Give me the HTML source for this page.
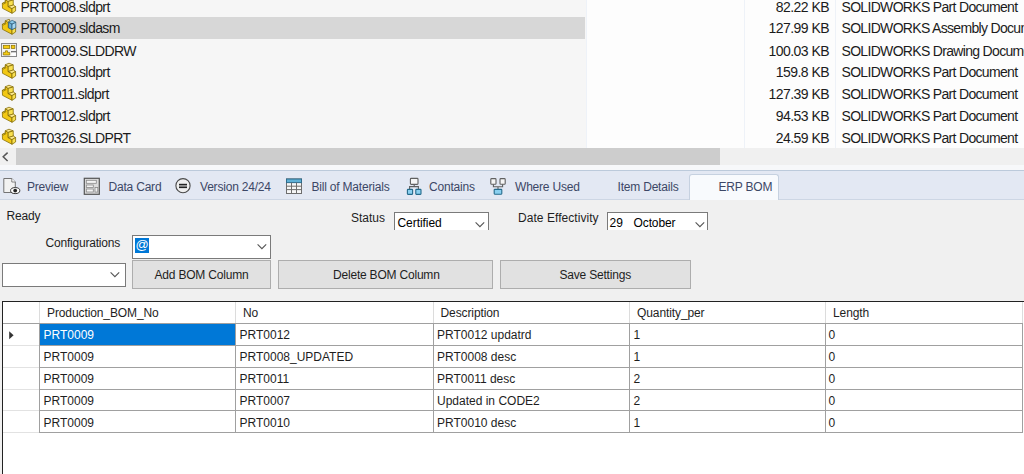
<!DOCTYPE html>
<html><head><meta charset="utf-8"><title>ERP BOM</title>
<style>
html,body{margin:0;padding:0;}
body{width:1024px;height:474px;overflow:hidden;position:relative;background:#f0f0f0;font-family:"Liberation Sans", sans-serif;}
.t{position:absolute;white-space:pre;line-height:20px;}
.r{position:absolute;}
.ic{position:absolute;overflow:visible;}
</style></head><body>
<div class="r" style="left:0px;top:0px;width:1024px;height:165px;background:#fdfdfd;"></div>
<div class="r" style="left:0px;top:0px;width:586px;height:148px;background:#f6f6f6;"></div>
<div class="r" style="left:0px;top:17px;width:585px;height:22px;background:#d7d7d7;"></div>
<div class="r" style="left:586px;top:0px;width:1px;height:148px;background:#eef2f8;"></div>
<div class="r" style="left:744px;top:0px;width:1px;height:148px;background:#eef2f8;"></div>
<div class="r" style="left:835px;top:0px;width:1px;height:148px;background:#eef2f8;"></div>
<svg class="ic" style="left:0px;top:-4px" width="18" height="18" viewBox="0 0 18 18">
<g stroke="#806800" stroke-width="0.75" stroke-linejoin="round">
<polygon points="5.2,3.8 8.2,5.4 8.2,10.6 12,12.6 12,17.3 2.5,12.3 2.3,7.4 5.2,6.0" fill="#f2c814"/>
<polygon points="2.3,7.4 5.2,6.0 6.2,6.5 3.4,8.0" fill="#ffe45a"/>
<polygon points="5.2,3.8 9,2.2 13.2,3.9 8.2,5.4" fill="#ffe98a"/>
<polygon points="8.2,5.4 13.2,3.9 13.3,9 8.2,10.6" fill="#f9e050"/>
<polygon points="8.2,10.6 13.3,9 15.6,10.5 12,12.6" fill="#ffec90"/>
<polygon points="12,12.6 15.6,10.5 15.6,15 12,17.3" fill="#f9e050"/>
</g></svg>
<div class="t" style="left:20.5px;top:-3px;font-size:14px;color:#1b1b1b;letter-spacing:-0.55px;">PRT0008.sldprt</div>
<div class="t" style="right:195px;top:-3px;font-size:14px;color:#1b1b1b;letter-spacing:-0.55px">82.22 KB</div>
<div class="t" style="left:841.5px;top:-3px;font-size:14px;color:#1b1b1b;letter-spacing:-0.68px;">SOLIDWORKS Part Document</div>
<svg class="ic" style="left:0px;top:17px" width="18" height="18" viewBox="0 0 18 18">
<g stroke="#806800" stroke-width="0.75" stroke-linejoin="round">
<polygon points="5.2,3.8 8.2,5.4 8.2,10.6 12,12.6 12,17.3 2.5,12.3 2.3,7.4 5.2,6.0" fill="#f2c814"/>
<polygon points="2.3,7.4 5.2,6.0 6.2,6.5 3.4,8.0" fill="#ffe45a"/>
<polygon points="12,12.6 15.6,10.5 15.6,15 12,17.3" fill="#f9e050"/>
<polygon points="5.2,3.8 9,2.4 10,3 8.2,5.4" fill="#ffe98a"/>
</g>
<g stroke="#2a5a78" stroke-width="0.75" stroke-linejoin="round">
<polygon points="8.6,5.2 12,7.0 12,12.6 8.6,10.8" fill="#6fb2d8"/>
<polygon points="12,7.0 15.8,5.2 15.8,10.8 12,12.6" fill="#a8d8f2"/>
<polygon points="8.6,5.2 12.2,3.4 15.8,5.2 12,7.0" fill="#8ccaea"/>
</g></svg>
<div class="t" style="left:20.5px;top:18px;font-size:14px;color:#1b1b1b;letter-spacing:-0.55px;">PRT0009.sldasm</div>
<div class="t" style="right:195px;top:18px;font-size:14px;color:#1b1b1b;letter-spacing:-0.55px">127.99 KB</div>
<div class="t" style="left:841.5px;top:18px;font-size:14px;color:#1b1b1b;letter-spacing:-0.68px;">SOLIDWORKS Assembly Document</div>
<svg class="ic" style="left:0px;top:40px" width="18" height="16" viewBox="0 0 18 16">
<rect x="1.5" y="3.5" width="15" height="13" fill="#f4f4f4" stroke="#888" stroke-width="1"/>
<rect x="3.3" y="5.3" width="6.4" height="3.2" fill="#f6cc10" stroke="#8a7000" stroke-width="0.7"/>
<rect x="11.3" y="5.3" width="3.6" height="3.2" fill="#f6cc10" stroke="#8a7000" stroke-width="0.7"/>
<path d="M5.5,10.8 h2 v1.6 h2.2 v2.6 h-6.4 v-2.6 h2.2 z" fill="#f6cc10" stroke="#8a7000" stroke-width="0.7"/>
<rect x="11" y="11.2" width="5.2" height="1.2" fill="#555"/>
<rect x="11.5" y="12.6" width="4.4" height="3.2" fill="#fff"/>
</svg>
<div class="t" style="left:20.5px;top:41px;font-size:14px;color:#1b1b1b;letter-spacing:-0.55px;">PRT0009.SLDDRW</div>
<div class="t" style="right:195px;top:41px;font-size:14px;color:#1b1b1b;letter-spacing:-0.55px">100.03 KB</div>
<div class="t" style="left:841.5px;top:41px;font-size:14px;color:#1b1b1b;letter-spacing:-0.68px;">SOLIDWORKS Drawing Document</div>
<svg class="ic" style="left:0px;top:61px" width="18" height="18" viewBox="0 0 18 18">
<g stroke="#806800" stroke-width="0.75" stroke-linejoin="round">
<polygon points="5.2,3.8 8.2,5.4 8.2,10.6 12,12.6 12,17.3 2.5,12.3 2.3,7.4 5.2,6.0" fill="#f2c814"/>
<polygon points="2.3,7.4 5.2,6.0 6.2,6.5 3.4,8.0" fill="#ffe45a"/>
<polygon points="5.2,3.8 9,2.2 13.2,3.9 8.2,5.4" fill="#ffe98a"/>
<polygon points="8.2,5.4 13.2,3.9 13.3,9 8.2,10.6" fill="#f9e050"/>
<polygon points="8.2,10.6 13.3,9 15.6,10.5 12,12.6" fill="#ffec90"/>
<polygon points="12,12.6 15.6,10.5 15.6,15 12,17.3" fill="#f9e050"/>
</g></svg>
<div class="t" style="left:20.5px;top:62px;font-size:14px;color:#1b1b1b;letter-spacing:-0.55px;">PRT0010.sldprt</div>
<div class="t" style="right:195px;top:62px;font-size:14px;color:#1b1b1b;letter-spacing:-0.55px">159.8 KB</div>
<div class="t" style="left:841.5px;top:62px;font-size:14px;color:#1b1b1b;letter-spacing:-0.68px;">SOLIDWORKS Part Document</div>
<svg class="ic" style="left:0px;top:83px" width="18" height="18" viewBox="0 0 18 18">
<g stroke="#806800" stroke-width="0.75" stroke-linejoin="round">
<polygon points="5.2,3.8 8.2,5.4 8.2,10.6 12,12.6 12,17.3 2.5,12.3 2.3,7.4 5.2,6.0" fill="#f2c814"/>
<polygon points="2.3,7.4 5.2,6.0 6.2,6.5 3.4,8.0" fill="#ffe45a"/>
<polygon points="5.2,3.8 9,2.2 13.2,3.9 8.2,5.4" fill="#ffe98a"/>
<polygon points="8.2,5.4 13.2,3.9 13.3,9 8.2,10.6" fill="#f9e050"/>
<polygon points="8.2,10.6 13.3,9 15.6,10.5 12,12.6" fill="#ffec90"/>
<polygon points="12,12.6 15.6,10.5 15.6,15 12,17.3" fill="#f9e050"/>
</g></svg>
<div class="t" style="left:20.5px;top:84px;font-size:14px;color:#1b1b1b;letter-spacing:-0.55px;">PRT0011.sldprt</div>
<div class="t" style="right:195px;top:84px;font-size:14px;color:#1b1b1b;letter-spacing:-0.55px">127.39 KB</div>
<div class="t" style="left:841.5px;top:84px;font-size:14px;color:#1b1b1b;letter-spacing:-0.68px;">SOLIDWORKS Part Document</div>
<svg class="ic" style="left:0px;top:105px" width="18" height="18" viewBox="0 0 18 18">
<g stroke="#806800" stroke-width="0.75" stroke-linejoin="round">
<polygon points="5.2,3.8 8.2,5.4 8.2,10.6 12,12.6 12,17.3 2.5,12.3 2.3,7.4 5.2,6.0" fill="#f2c814"/>
<polygon points="2.3,7.4 5.2,6.0 6.2,6.5 3.4,8.0" fill="#ffe45a"/>
<polygon points="5.2,3.8 9,2.2 13.2,3.9 8.2,5.4" fill="#ffe98a"/>
<polygon points="8.2,5.4 13.2,3.9 13.3,9 8.2,10.6" fill="#f9e050"/>
<polygon points="8.2,10.6 13.3,9 15.6,10.5 12,12.6" fill="#ffec90"/>
<polygon points="12,12.6 15.6,10.5 15.6,15 12,17.3" fill="#f9e050"/>
</g></svg>
<div class="t" style="left:20.5px;top:106px;font-size:14px;color:#1b1b1b;letter-spacing:-0.55px;">PRT0012.sldprt</div>
<div class="t" style="right:195px;top:106px;font-size:14px;color:#1b1b1b;letter-spacing:-0.55px">94.53 KB</div>
<div class="t" style="left:841.5px;top:106px;font-size:14px;color:#1b1b1b;letter-spacing:-0.68px;">SOLIDWORKS Part Document</div>
<svg class="ic" style="left:0px;top:127px" width="18" height="18" viewBox="0 0 18 18">
<g stroke="#806800" stroke-width="0.75" stroke-linejoin="round">
<polygon points="5.2,3.8 8.2,5.4 8.2,10.6 12,12.6 12,17.3 2.5,12.3 2.3,7.4 5.2,6.0" fill="#f2c814"/>
<polygon points="2.3,7.4 5.2,6.0 6.2,6.5 3.4,8.0" fill="#ffe45a"/>
<polygon points="5.2,3.8 9,2.2 13.2,3.9 8.2,5.4" fill="#ffe98a"/>
<polygon points="8.2,5.4 13.2,3.9 13.3,9 8.2,10.6" fill="#f9e050"/>
<polygon points="8.2,10.6 13.3,9 15.6,10.5 12,12.6" fill="#ffec90"/>
<polygon points="12,12.6 15.6,10.5 15.6,15 12,17.3" fill="#f9e050"/>
</g></svg>
<div class="t" style="left:20.5px;top:128px;font-size:14px;color:#1b1b1b;letter-spacing:-0.55px;">PRT0326.SLDPRT</div>
<div class="t" style="right:195px;top:128px;font-size:14px;color:#1b1b1b;letter-spacing:-0.55px">24.59 KB</div>
<div class="t" style="left:841.5px;top:128px;font-size:14px;color:#1b1b1b;letter-spacing:-0.68px;">SOLIDWORKS Part Document</div>
<div class="r" style="left:0px;top:148px;width:1024px;height:17px;background:#f0f0f0;"></div>
<div class="r" style="left:16px;top:148px;width:704px;height:17px;background:#cdcdcd;"></div>
<svg class="ic" style="left:0px;top:148px" width="16" height="17" viewBox="0 0 16 17"><path d="M7.6,4.6 L3.2,8.8 L7.6,13" fill="none" stroke="#555" stroke-width="1.5"/></svg>
<div class="r" style="left:0px;top:165px;width:1024px;height:5px;background:#f7f8fa;"></div>
<div class="r" style="left:0px;top:170px;width:1024px;height:1px;background:#bccadb;"></div>
<div class="r" style="left:0px;top:171px;width:1024px;height:28px;background:#e3e8f3;"></div>
<div class="r" style="left:0px;top:199px;width:1024px;height:1px;background:#cdd6e4;"></div>
<div class="r" style="left:689px;top:174px;width:90px;height:26px;background:#f8fafd;border:1px solid #c6d1e0;border-bottom:none;border-radius:3px 3px 0 0;box-sizing:border-box"></div>
<div class="t" style="left:27px;top:177px;font-size:12px;color:#3c4766;letter-spacing:-0.2px;">Preview</div>
<div class="t" style="left:108.5px;top:177px;font-size:12px;color:#3c4766;letter-spacing:-0.2px;">Data Card</div>
<div class="t" style="left:200px;top:177px;font-size:12px;color:#3c4766;letter-spacing:-0.2px;">Version 24/24</div>
<div class="t" style="left:311.5px;top:177px;font-size:12px;color:#3c4766;letter-spacing:-0.2px;">Bill of Materials</div>
<div class="t" style="left:429px;top:177px;font-size:12px;color:#3c4766;letter-spacing:-0.2px;">Contains</div>
<div class="t" style="left:515px;top:177px;font-size:12px;color:#3c4766;letter-spacing:-0.2px;">Where Used</div>
<div class="t" style="left:617.5px;top:177px;font-size:12px;color:#3c4766;letter-spacing:-0.2px;">Item Details</div>
<div class="t" style="left:718.5px;top:177px;font-size:12px;color:#3c4766;letter-spacing:-0.2px;">ERP BOM</div>
<svg class="ic" style="left:0px;top:172px" width="24" height="26" viewBox="0 0 24 26">
<path d="M3.8,6.5 h8 l3.5,3.5 v10.5 h-11.5 z" fill="#f2f2f2" stroke="#666" stroke-width="0.9"/>
<path d="M11.8,6.5 v3.5 h3.5" fill="#fff" stroke="#666" stroke-width="0.8"/>
<ellipse cx="15.2" cy="18.6" rx="4.6" ry="3" fill="#fff" stroke="#333" stroke-width="1"/>
<circle cx="15.2" cy="18.6" r="1.9" fill="#222"/>
</svg>
<svg class="ic" style="left:80px;top:172px" width="24" height="26" viewBox="0 0 24 26">
<rect x="4.3" y="6.3" width="15" height="16" fill="#dcdcdc" stroke="#555" stroke-width="1.2"/>
<rect x="6.3" y="8.3" width="10" height="3" fill="#f4f4f4" stroke="#888" stroke-width="0.8"/>
<rect x="6.3" y="13" width="7" height="2.5" fill="#f4f4f4" stroke="#888" stroke-width="0.8"/>
<rect x="6.3" y="17" width="7" height="3" fill="#f4f4f4" stroke="#888" stroke-width="0.8"/>
<rect x="15" y="15.5" width="2.8" height="4.6" fill="#eee" stroke="#888" stroke-width="0.8"/>
</svg>
<svg class="ic" style="left:170px;top:172px" width="26" height="26" viewBox="0 0 26 26">
<circle cx="13" cy="13.7" r="7.1" fill="#efefef" stroke="#4a4a4a" stroke-width="1.1"/>
<rect x="9" y="11.8" width="8" height="1.5" fill="#222"/>
<rect x="9" y="13.3" width="8" height="1.4" fill="#888"/>
<rect x="9" y="14.7" width="8" height="1.4" fill="#222"/>
</svg>
<svg class="ic" style="left:282px;top:172px" width="24" height="26" viewBox="0 0 24 26">
<rect x="4.5" y="7" width="15" height="14.5" fill="#f6f6f6" stroke="#6e6e6e" stroke-width="1"/>
<rect x="4.5" y="7" width="15" height="3.6" fill="#5fb0d6" stroke="#2f6c8c" stroke-width="1"/>
<path d="M9.5,10.6 v10.9 M14.5,10.6 v10.9 M4.5,14.2 h15 M4.5,17.6 h15" stroke="#6e6e6e" stroke-width="1"/>
</svg>
<svg class="ic" style="left:402px;top:172px" width="24" height="26" viewBox="0 0 24 26">
<rect x="8.4" y="6.4" width="7.6" height="6" rx="0.8" fill="#f6f6f6" stroke="#606060" stroke-width="1.1"/>
<path d="M12.2,12.4 v2.2 M7.6,17 v-2.4 h8.8 v2.4" fill="none" stroke="#606060" stroke-width="1.1"/>
<rect x="5.4" y="17.4" width="5.2" height="5" rx="0.6" fill="#8ad0f0" stroke="#256b8c" stroke-width="1.1"/>
<rect x="13.8" y="17.4" width="5.2" height="5" rx="0.6" fill="#8ad0f0" stroke="#256b8c" stroke-width="1.1"/>
</svg>
<svg class="ic" style="left:486px;top:172px" width="24" height="26" viewBox="0 0 24 26">
<rect x="4.8" y="6.6" width="5.2" height="5.6" rx="0.8" fill="#f6f6f6" stroke="#606060" stroke-width="1.1"/>
<rect x="14" y="6.6" width="5.2" height="5.6" rx="0.8" fill="#f6f6f6" stroke="#606060" stroke-width="1.1"/>
<path d="M7.4,12.2 v2.6 h9.2 v-2.6 M12,14.8 v2.4" fill="none" stroke="#606060" stroke-width="1.1"/>
<rect x="8.2" y="17.4" width="7.6" height="4.8" rx="0.6" fill="#8ad0f0" stroke="#256b8c" stroke-width="1.1"/>
</svg>
<div class="r" style="left:0px;top:200px;width:1024px;height:274px;background:#f0f0f0;"></div>
<div class="t" style="left:6.5px;top:206px;font-size:12px;color:#1e1e1e;letter-spacing:-0.2px;">Ready</div>
<div class="t" style="left:45.5px;top:233px;font-size:12px;color:#1e1e1e;letter-spacing:-0.2px;">Configurations</div>
<div class="t" style="left:351px;top:208px;font-size:12px;color:#1e1e1e;letter-spacing:0px;">Status</div>
<div class="t" style="left:518px;top:208px;font-size:12px;color:#1e1e1e;letter-spacing:0.05px;">Date Effectivity</div>
<div class="r" style="left:394px;top:212px;width:95px;height:18px;background:#fff;border:1px solid #7a7a7a;border-bottom:none;box-sizing:border-box"></div>
<div class="t" style="left:397.5px;top:213px;font-size:12px;color:#000;letter-spacing:-0.05px;">Certified</div>
<svg class="ic" style="left:474px;top:221px" width="12" height="8" viewBox="0 0 12 8"><path d="M1.6,1.4 L5.9,5.7 L10.2,1.4" fill="none" stroke="#555" stroke-width="1.1"/></svg>
<div class="r" style="left:607px;top:212px;width:101px;height:18px;background:#fff;border:1px solid #7a7a7a;border-bottom:none;box-sizing:border-box"></div>
<div class="t" style="left:609.5px;top:213px;font-size:12px;color:#000;letter-spacing:0px;">29</div>
<div class="t" style="left:633.5px;top:213px;font-size:12px;color:#000;letter-spacing:-0.1px;">October</div>
<svg class="ic" style="left:693.5px;top:221px" width="12" height="8" viewBox="0 0 12 8"><path d="M1.6,1.4 L5.9,5.7 L10.2,1.4" fill="none" stroke="#555" stroke-width="1.1"/></svg>
<div class="r" style="left:132px;top:235px;width:139px;height:24px;background:#fff;border:1px solid #7a7a7a;box-sizing:border-box"></div>
<div class="r" style="left:135px;top:238px;width:14px;height:15px;background:#0078d7;"></div>
<div class="t" style="left:135.5px;top:235px;font-size:13px;color:#fff;line-height:20px">@</div>
<svg class="ic" style="left:256px;top:243px" width="12" height="8" viewBox="0 0 12 8"><path d="M1.6,1.4 L5.9,5.7 L10.2,1.4" fill="none" stroke="#555" stroke-width="1.1"/></svg>
<div class="r" style="left:2px;top:263px;width:124px;height:24px;background:#fff;border:1px solid #7a7a7a;box-sizing:border-box"></div>
<svg class="ic" style="left:109px;top:271px" width="12" height="8" viewBox="0 0 12 8"><path d="M1.6,1.4 L5.9,5.7 L10.2,1.4" fill="none" stroke="#555" stroke-width="1.1"/></svg>
<div class="r" style="left:132px;top:260px;width:139px;height:29px;background:#e1e1e1;border:1px solid #adadad;box-sizing:border-box"></div>
<div class="t" style="left:154.5px;top:265px;font-size:12px;color:#1e1e1e;letter-spacing:-0.2px;">Add BOM Column</div>
<div class="r" style="left:278px;top:260px;width:215px;height:29px;background:#e1e1e1;border:1px solid #adadad;box-sizing:border-box"></div>
<div class="t" style="left:333px;top:265px;font-size:12px;color:#1e1e1e;letter-spacing:-0.2px;">Delete BOM Column</div>
<div class="r" style="left:500px;top:260px;width:191px;height:29px;background:#e1e1e1;border:1px solid #adadad;box-sizing:border-box"></div>
<div class="t" style="left:559.5px;top:265px;font-size:12px;color:#1e1e1e;letter-spacing:-0.2px;">Save Settings</div>
<div class="r" style="left:2px;top:301px;width:1022px;height:173px;background:#ffffff;"></div>
<div class="r" style="left:2px;top:301px;width:1022px;height:1px;background:#222;"></div>
<div class="r" style="left:2px;top:301px;width:1px;height:173px;background:#222;"></div>
<div class="r" style="left:39px;top:302px;width:1px;height:21px;background:#dcdcdc;"></div>
<div class="r" style="left:235px;top:302px;width:1px;height:21px;background:#dcdcdc;"></div>
<div class="r" style="left:433px;top:302px;width:1px;height:21px;background:#dcdcdc;"></div>
<div class="r" style="left:629px;top:302px;width:1px;height:21px;background:#dcdcdc;"></div>
<div class="r" style="left:825px;top:302px;width:1px;height:21px;background:#dcdcdc;"></div>
<div class="r" style="left:1022px;top:302px;width:1px;height:21px;background:#dcdcdc;"></div>
<div class="r" style="left:3px;top:323px;width:1019px;height:1px;background:#a0a0a0;"></div>
<div class="r" style="left:3px;top:345px;width:36px;height:1px;background:#e2e2e2;"></div>
<div class="r" style="left:39px;top:345px;width:984px;height:1px;background:#a0a0a0;"></div>
<div class="r" style="left:3px;top:367px;width:36px;height:1px;background:#e2e2e2;"></div>
<div class="r" style="left:39px;top:367px;width:984px;height:1px;background:#a0a0a0;"></div>
<div class="r" style="left:3px;top:389px;width:36px;height:1px;background:#e2e2e2;"></div>
<div class="r" style="left:39px;top:389px;width:984px;height:1px;background:#a0a0a0;"></div>
<div class="r" style="left:3px;top:410px;width:36px;height:1px;background:#e2e2e2;"></div>
<div class="r" style="left:39px;top:410px;width:984px;height:1px;background:#a0a0a0;"></div>
<div class="r" style="left:3px;top:432px;width:36px;height:1px;background:#e2e2e2;"></div>
<div class="r" style="left:39px;top:432px;width:984px;height:1px;background:#a0a0a0;"></div>
<div class="r" style="left:39px;top:323px;width:1px;height:110px;background:#a0a0a0;"></div>
<div class="r" style="left:235px;top:323px;width:1px;height:110px;background:#a0a0a0;"></div>
<div class="r" style="left:433px;top:323px;width:1px;height:110px;background:#a0a0a0;"></div>
<div class="r" style="left:629px;top:323px;width:1px;height:110px;background:#a0a0a0;"></div>
<div class="r" style="left:825px;top:323px;width:1px;height:110px;background:#a0a0a0;"></div>
<div class="r" style="left:1022px;top:323px;width:1px;height:110px;background:#a0a0a0;"></div>
<div class="r" style="left:40px;top:324px;width:195px;height:21px;background:#0078d7;"></div>
<svg class="ic" style="left:8px;top:330px" width="8" height="11" viewBox="0 0 8 11"><path d="M1.2,1.2 L5.6,5.2 L1.2,9.2 z" fill="#333"/></svg>
<div class="t" style="left:47px;top:303px;font-size:12px;color:#1e1e1e;letter-spacing:-0.1px;">Production_BOM_No</div>
<div class="t" style="left:243px;top:303px;font-size:12px;color:#1e1e1e;letter-spacing:-0.1px;">No</div>
<div class="t" style="left:440.5px;top:303px;font-size:12px;color:#1e1e1e;letter-spacing:-0.1px;">Description</div>
<div class="t" style="left:637px;top:303px;font-size:12px;color:#1e1e1e;letter-spacing:-0.1px;">Quantity_per</div>
<div class="t" style="left:833px;top:303px;font-size:12px;color:#1e1e1e;letter-spacing:-0.1px;">Length</div>
<div class="t" style="left:43.5px;top:325px;font-size:12px;color:#fff;letter-spacing:0px;">PRT0009</div>
<div class="t" style="left:239.5px;top:325px;font-size:12px;color:#1e1e1e;letter-spacing:0px;">PRT0012</div>
<div class="t" style="left:437px;top:325px;font-size:12px;color:#1e1e1e;letter-spacing:0px;">PRT0012 updatrd</div>
<div class="t" style="left:633.5px;top:325px;font-size:12px;color:#1e1e1e;letter-spacing:0px;">1</div>
<div class="t" style="left:828.5px;top:325px;font-size:12px;color:#1e1e1e;letter-spacing:0px;">0</div>
<div class="t" style="left:43.5px;top:347px;font-size:12px;color:#1e1e1e;letter-spacing:0px;">PRT0009</div>
<div class="t" style="left:239.5px;top:347px;font-size:12px;color:#1e1e1e;letter-spacing:0px;">PRT0008_UPDATED</div>
<div class="t" style="left:437px;top:347px;font-size:12px;color:#1e1e1e;letter-spacing:0px;">PRT0008 desc</div>
<div class="t" style="left:633.5px;top:347px;font-size:12px;color:#1e1e1e;letter-spacing:0px;">1</div>
<div class="t" style="left:828.5px;top:347px;font-size:12px;color:#1e1e1e;letter-spacing:0px;">0</div>
<div class="t" style="left:43.5px;top:369px;font-size:12px;color:#1e1e1e;letter-spacing:0px;">PRT0009</div>
<div class="t" style="left:239.5px;top:369px;font-size:12px;color:#1e1e1e;letter-spacing:0px;">PRT0011</div>
<div class="t" style="left:437px;top:369px;font-size:12px;color:#1e1e1e;letter-spacing:0px;">PRT0011 desc</div>
<div class="t" style="left:633.5px;top:369px;font-size:12px;color:#1e1e1e;letter-spacing:0px;">2</div>
<div class="t" style="left:828.5px;top:369px;font-size:12px;color:#1e1e1e;letter-spacing:0px;">0</div>
<div class="t" style="left:43.5px;top:391px;font-size:12px;color:#1e1e1e;letter-spacing:0px;">PRT0009</div>
<div class="t" style="left:239.5px;top:391px;font-size:12px;color:#1e1e1e;letter-spacing:0px;">PRT0007</div>
<div class="t" style="left:437px;top:391px;font-size:12px;color:#1e1e1e;letter-spacing:0px;">Updated in CODE2</div>
<div class="t" style="left:633.5px;top:391px;font-size:12px;color:#1e1e1e;letter-spacing:0px;">2</div>
<div class="t" style="left:828.5px;top:391px;font-size:12px;color:#1e1e1e;letter-spacing:0px;">0</div>
<div class="t" style="left:43.5px;top:413px;font-size:12px;color:#1e1e1e;letter-spacing:0px;">PRT0009</div>
<div class="t" style="left:239.5px;top:413px;font-size:12px;color:#1e1e1e;letter-spacing:0px;">PRT0010</div>
<div class="t" style="left:437px;top:413px;font-size:12px;color:#1e1e1e;letter-spacing:0px;">PRT0010 desc</div>
<div class="t" style="left:633.5px;top:413px;font-size:12px;color:#1e1e1e;letter-spacing:0px;">1</div>
<div class="t" style="left:828.5px;top:413px;font-size:12px;color:#1e1e1e;letter-spacing:0px;">0</div>
</body></html>
